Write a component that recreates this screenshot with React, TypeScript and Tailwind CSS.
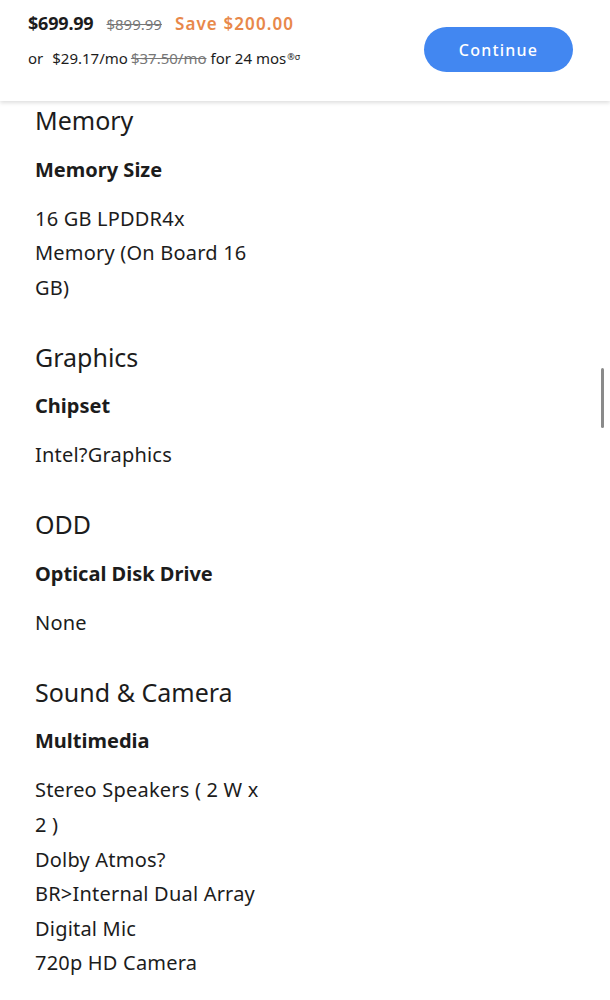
import React from "react";

const sections = [
  { title: "Memory", sub: "Memory Size", lines: ["16 GB LPDDR4x Memory (On Board 16 GB)"] },
  { title: "Graphics", sub: "Chipset", lines: ["Intel?Graphics"] },
  { title: "ODD", sub: "Optical Disk Drive", lines: ["None"] },
  {
    title: "Sound & Camera",
    sub: "Multimedia",
    lines: ["Stereo Speakers ( 2 W x 2 )", "Dolby Atmos?", "BR>Internal Dual Array Digital Mic", "720p HD Camera"],
  },
];

export default function App() {
  return (
    <div className="relative w-[610px] h-[1000px] overflow-hidden bg-white text-[#1c1c1c] font-['Noto_Sans','Open_Sans',sans-serif]">
      <header className="relative z-10 h-[101px] bg-white shadow-[0_2px_4px_rgba(0,0,0,0.13)] flex justify-between pl-[28px] pr-[37px]">
        <div className="pt-[10px]">
          <div className="flex items-baseline leading-[26px]">
            <span className="text-[18px] font-bold tracking-[-0.2px]">$699.99</span>
            <span className="ml-[13px] text-[15px] text-[#777] line-through">$899.99</span>
            <span className="ml-[13px] text-[17px] font-semibold text-[#e8884a] tracking-[1.1px]">Save $200.00</span>
          </div>
          <div className="mt-[9px] flex items-baseline text-[15px] leading-[24px]">
            <span>or</span>
            <span className="ml-[9px]">$29.17/mo</span>
            <span className="ml-[3px] text-[#777] line-through">$37.50/mo</span>
            <span className="ml-[4px]">for 24 mos</span>
            <sup className="text-[9px] ml-[1px]">®σ</sup>
          </div>
        </div>
        <button className="mt-[27px] h-[45px] w-[149px] rounded-full bg-[#4287f1] text-white text-[16px] font-medium tracking-[1.2px]">
          Continue
        </button>
      </header>
      <main className="px-[35px] pt-[2px]">
        {sections.map((s, i) => (
          <section key={s.title} className={i === 0 ? "" : "mt-[34.5px]"}>
            <h2 className="text-[25px] leading-[34px] font-normal">{s.title}</h2>
            <h3 className="mt-[15.5px] text-[20px] leading-[34px] font-bold">{s.sub}</h3>
            <div className="mt-[15px] w-[225px] text-[20px] leading-[34.6px] tracking-[0.2px]">
              {s.lines.map((l) => (
                <div key={l}>{l}</div>
              ))}
            </div>
          </section>
        ))}
      </main>
      <div className="absolute right-[6px] top-[368px] h-[60px] w-[3px] rounded-full bg-[#8a8a8a]" />
    </div>
  );
}
